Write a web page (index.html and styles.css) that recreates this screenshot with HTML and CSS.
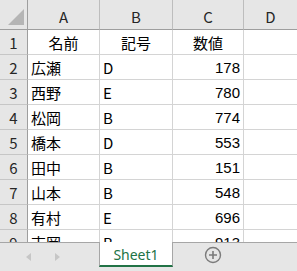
FILE: index.html
```html
<!DOCTYPE html>
<html lang="ja">
<head>
  <meta charset="UTF-8">
  <title>Sheet1</title>
  <link rel="stylesheet" href="styles.css">
</head>
<body>
  <div class="sheet">
    <div class="grid">
      <div class="corner">
        <svg width="16" height="16" viewBox="0 0 16 16"><polygon points="16,0 16,16 0,16" fill="#b5b5b5"/></svg>
      </div>
      <div class="colhead">A</div>
      <div class="colhead">B</div>
      <div class="colhead">C</div>
      <div class="colhead">D</div>

      <div class="rowhead">1</div>
      <div class="cell center">名前</div>
      <div class="cell center">記号</div>
      <div class="cell center">数値</div>
      <div class="cell"></div>

      <div class="rowhead">2</div>
      <div class="cell">広瀬</div>
      <div class="cell">D</div>
      <div class="cell num">178</div>
      <div class="cell"></div>

      <div class="rowhead">3</div>
      <div class="cell">西野</div>
      <div class="cell">E</div>
      <div class="cell num">780</div>
      <div class="cell"></div>

      <div class="rowhead">4</div>
      <div class="cell">松岡</div>
      <div class="cell">B</div>
      <div class="cell num">774</div>
      <div class="cell"></div>

      <div class="rowhead">5</div>
      <div class="cell">橋本</div>
      <div class="cell">D</div>
      <div class="cell num">553</div>
      <div class="cell"></div>

      <div class="rowhead">6</div>
      <div class="cell">田中</div>
      <div class="cell">B</div>
      <div class="cell num">151</div>
      <div class="cell"></div>

      <div class="rowhead">7</div>
      <div class="cell">山本</div>
      <div class="cell">B</div>
      <div class="cell num">548</div>
      <div class="cell"></div>

      <div class="rowhead">8</div>
      <div class="cell">有村</div>
      <div class="cell">E</div>
      <div class="cell num">696</div>
      <div class="cell"></div>

      <div class="rowhead">9</div>
      <div class="cell">吉岡</div>
      <div class="cell">B</div>
      <div class="cell num">913</div>
      <div class="cell"></div>
    </div>
  </div>
  <div class="tabbar">
    <div class="nav">
      <svg width="6" height="8" viewBox="0 0 6 8"><polygon points="5,0 5,8 0,4" fill="#c6c6c6"/></svg>
      <svg width="6" height="8" viewBox="0 0 6 8"><polygon points="0,0 0,8 5,4" fill="#c6c6c6"/></svg>
    </div>
    <div class="tab">Sheet1</div>
    <div class="add">
      <svg width="18" height="18" viewBox="0 0 18 18">
        <circle cx="9" cy="9" r="7.5" fill="none" stroke="#7b7b7b" stroke-width="1.4"/>
        <path d="M9 5v8M5 9h8" stroke="#7b7b7b" stroke-width="1.6"/>
      </svg>
    </div>
  </div>
</body>
</html>
```

FILE: styles.css
```css
body {
  margin: 0;
  width: 297px;
  height: 271px;
  overflow: hidden;
  background: #fff;
  font-family: "Noto Sans CJK JP", "Noto Sans", sans-serif;
  color: #000;
}

.sheet {
  height: 242px;
  overflow: hidden;
}

.grid {
  display: grid;
  grid-template-columns: 28px 72px 73px 71px 54px;
  grid-template-rows: 30px repeat(9, 25px);
  font-size: 15px;
}

.grid > div {
  box-sizing: border-box;
  display: flex;
  align-items: center;
  white-space: nowrap;
  overflow: hidden;
}

.corner {
  background: #e6e6e6;
  border-right: 1px solid #9e9e9e;
  border-bottom: 1px solid #9e9e9e;
  justify-content: flex-end;
  align-items: flex-end !important;
  padding: 0 3px 4px 0;
}

.colhead {
  background: #e6e6e6;
  border-right: 1px solid #bdbdbd;
  border-bottom: 1px solid #9e9e9e;
  justify-content: center;
  padding-top: 4px;
  color: #262626;
}

.rowhead {
  background: #e6e6e6;
  border-right: 1px solid #9e9e9e;
  border-bottom: 1px solid #c6c6c6;
  justify-content: center;
  color: #262626;
}

.cell {
  border-right: 1px solid #d4d4d4;
  border-bottom: 1px solid #d4d4d4;
  padding: 0 3px;
}

.center {
  justify-content: center;
}

.num {
  justify-content: flex-end;
  font-family: "Liberation Sans", sans-serif;
}

.tabbar {
  display: flex;
  height: 29px;
  background: #e6e6e6;
}

.nav {
  width: 99px;
  border-top: 1px solid #a6a6a6;
  display: flex;
  align-items: center;
  gap: 23px;
  padding-left: 26px;
  box-sizing: border-box;
}

.tab {
  width: 74px;
  height: 25px;
  box-sizing: border-box;
  background: #fff;
  border-left: 1px solid #a6a6a6;
  border-right: 1px solid #a6a6a6;
  border-bottom: 2px solid #217346;
  color: #217346;
  font-family: "Noto Sans", sans-serif;
  font-size: 14px;
  display: flex;
  justify-content: center;
  align-items: center;
  padding-top: 2px;
}

.add {
  flex: 1;
  border-top: 1px solid #a6a6a6;
  display: flex;
  align-items: center;
  padding-left: 31px;
  padding-bottom: 4px;
}
```
